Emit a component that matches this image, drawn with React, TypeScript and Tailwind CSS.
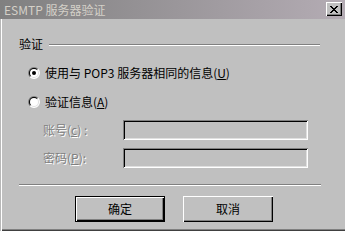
import React from "react";

function Radio({ checked }: { checked?: boolean }) {
  return (
    <svg width="12" height="12" viewBox="0 0 12 12" className="shrink-0">
      <path d="M10.243 1.757 A6 6 0 0 0 1.757 10.243 Z" fill="#808080" />
      <path d="M10.243 1.757 A6 6 0 0 1 1.757 10.243 Z" fill="#ffffff" />
      <path d="M9.536 2.464 A5 5 0 0 0 2.464 9.536 Z" fill="#000000" />
      <path d="M9.536 2.464 A5 5 0 0 1 2.464 9.536 Z" fill="#dfdfdf" />
      <circle cx="6" cy="6" r="4" fill="#ffffff" />
      {checked && <circle cx="6" cy="6" r="2" fill="#000000" />}
    </svg>
  );
}

function CloseButton() {
  const px: [number, number][] = [];
  const rows = ["XX....XX", ".XX..XX.", "..XXXX..", "...XX...", "..XXXX..", ".XX..XX.", "XX....XX"];
  rows.forEach((r, y) => r.split("").forEach((c, x) => c === "X" && px.push([x, y])));
  return (
    <div className="mt-[2px] self-start w-[16px] h-[14px] bg-[#c0c0c0] shadow-[inset_1px_1px_#fff,inset_-1px_-1px_#000,inset_-2px_-2px_#808080] flex items-center justify-center">
      <svg width="8" height="7" viewBox="0 0 8 7" shapeRendering="crispEdges">
        {px.map(([x, y]) => (
          <rect key={`${x}-${y}`} x={x} y={y} width="1" height="1" fill="#000" />
        ))}
      </svg>
    </div>
  );
}

export default function App() {
  return (
    <div className="w-[345px] h-[231px] bg-[#c0c0c0] flex flex-col text-[12px] leading-[14px] text-black font-['Noto_Sans_CJK_SC',sans-serif] overflow-hidden">
      <div className="h-[19px] shrink-0 flex items-center bg-linear-to-r from-[#808080] to-[#b4acb4] pl-[4px] pr-[3px]">
        <span className="flex-1 text-[#d4d0c8]">ESMTP 服务器验证</span>
        <CloseButton />
      </div>
      <div className="flex-1 flex flex-col shadow-[inset_1px_0_#b8b8b8,inset_2px_0_#fff,inset_0_-1px_#404040,inset_0_-2px_#808080]">
        <div className="mt-[18px] h-[14px] flex items-start pl-[19px] pr-[25px]">
          <span>验证</span>
          <div className="ml-[6px] mt-[7px] flex-1 h-[2px] border-t border-t-[#808080] border-b border-b-white" />
        </div>
        <div className="mt-[15px] h-[14px] flex items-center pl-[28px]">
          <Radio checked />
          <span className="ml-[5px]">
            使用与 POP3 服务器相同的信息(<span className="underline">U</span>)
          </span>
        </div>
        <div className="mt-[15px] h-[14px] flex items-center pl-[28px]">
          <Radio />
          <span className="ml-[5px]">
            验证信息(<span className="underline">A</span>)
          </span>
        </div>
        <div className="mt-[11px] h-[20px] flex items-center pl-[43px]">
          <span className="w-[80px] text-[#808080] [text-shadow:1px_1px_0_#fff]">
            账号(<span className="underline">c</span>) :
          </span>
          <div className="w-[185px] h-[20px] bg-[#c0c0c0] shadow-[inset_1px_1px_#808080,inset_-1px_-1px_#fff,inset_2px_2px_#000,inset_-2px_-2px_#dfdfdf]" />
        </div>
        <div className="mt-[8px] h-[20px] flex items-center pl-[43px]">
          <span className="w-[80px] text-[#808080] [text-shadow:1px_1px_0_#fff]">
            密码(<span className="underline">P</span>):
          </span>
          <div className="w-[185px] h-[20px] bg-[#c0c0c0] shadow-[inset_1px_1px_#808080,inset_-1px_-1px_#fff,inset_2px_2px_#000,inset_-2px_-2px_#dfdfdf]" />
        </div>
        <div className="mt-[16px] ml-[19px] w-[302px] h-[2px] border-t border-t-[#808080] border-b border-b-white" />
        <div className="mt-[10px] flex pl-[75px] gap-[18px]">
          <div className="w-[90px] h-[26px] border border-black flex">
            <div className="flex-1 flex items-center justify-center shadow-[inset_1px_1px_#fff,inset_-1px_-1px_#000,inset_-2px_-2px_#808080]">
              确定
            </div>
          </div>
          <div className="w-[90px] h-[26px] flex items-center justify-center shadow-[inset_1px_1px_#fff,inset_-1px_-1px_#000,inset_-2px_-2px_#808080]">
            取消
          </div>
        </div>
      </div>
    </div>
  );
}
